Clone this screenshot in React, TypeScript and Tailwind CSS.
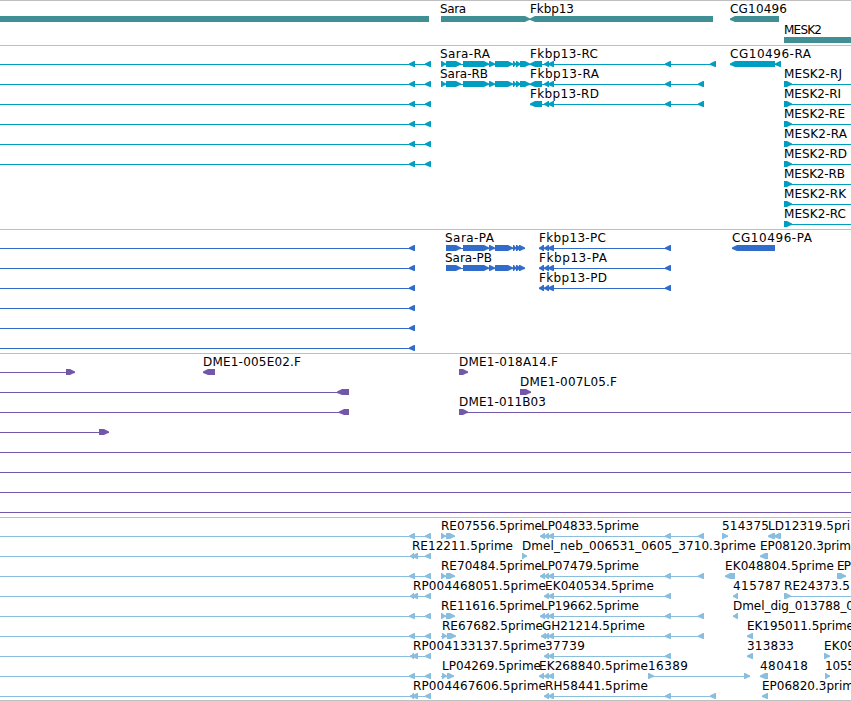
type Dir = 'l' | 'r';
type Exon = [start: number, end: number, dir: Dir];
type Label = [text: string, x: number, width: number];
type Row = { lines?: [number, number][]; exons?: Exon[]; labels?: Label[] };
type TrackData = { id: string; height: string; pitch: number; fill: string; rows: Row[] };

// left hand gene, shared by most of the rows
const TAIL: Exon[] = [[409, 415, 'l'], [425, 431, 'l']];
const TAIL_EST: Exon[] = [[410, 414, 'l'], [412, 418, 'l'], [425, 431, 'l']];

const SARA_CDS: Exon[] = [[446, 461, 'r'], [463, 489, 'r'], [489, 495, 'r'], [495, 513, 'r'], [513, 517, 'r'], [516, 521, 'r']];
const FKBP_CDS: Exon[] = [[544, 549, 'l'], [548, 554, 'l'], [665, 671, 'l']];

const saraR = (name: string): Row => ({
  lines: [[0, 431], [441, 530], [530, 704]],
  exons: [...TAIL, [441, 446, 'r'], ...SARA_CDS, [520, 530, 'r'], [530, 542, 'l'], ...FKBP_CDS],
  labels: [[name, 440, name === 'Sara-RA' ? 50 : 48]],
});

const mesk = (name: string, width: number): Row => ({
  lines: [[784, 851]],
  exons: [[784, 792, 'r']],
  labels: [[name, 784, width]],
});

const merge = (...rows: Row[]): Row => ({
  lines: rows.flatMap((r) => r.lines ?? []),
  exons: rows.flatMap((r) => r.exons ?? []),
  labels: rows.flatMap((r) => r.labels ?? []),
});

const tail: Row = { lines: [[0, 431]], exons: TAIL };
const tailEst: Row = { lines: [[0, 431]], exons: TAIL_EST };
const tailCds: Row = { lines: [[0, 415]], exons: [[409, 415, 'l']] };

const protein = (sara: Label | null, fkbp: Label): Row => merge(
  tailCds,
  sara ? { lines: [[446, 525]], exons: [...SARA_CDS, [519, 525, 'r']], labels: [sara] } : {},
  { lines: [[539, 671]], exons: [[539, 544, 'l'], ...FKBP_CDS], labels: [fkbp] },
);

const saraEst = (name: string, x: number, width: number, end: number): Row => ({
  lines: [[441, end]],
  exons: [[x, x + 5, 'r'], [x + 5, end, 'r']],
  labels: [[name, x, width]],
});

const fkbpEst = (name: string, x: number, width: number, start: number, end: number): Row => ({
  lines: [[start, end]],
  exons: [
    ...(start < 545 ? [[start, start + 5, 'l'] as Exon] : []),
    ...FKBP_CDS.filter((e) => e[1] <= end),
    ...(end > 671 ? [[end - 6, end, 'l'] as Exon] : []),
  ],
  labels: [[name, x, width]],
});

const hit = (name: string, x: number, width: number, end: number, dir: Dir): Row => ({
  exons: [[x, end, dir]],
  labels: [[name, x, width]],
});

const tracks: TrackData[] = [
  {
    id: 'genes', height: 'h-[45px]', pitch: 21, fill: '#3f8f94',
    rows: [
      {
        exons: [[441, 530, 'r'], [530, 713, 'l'], [730, 779, 'l']],
        labels: [['Sara', 440, 26], ['Fkbp13', 530, 44], ['CG10496', 730, 57]],
      },
      { labels: [['MESK2', 784, 38]] },
    ],
  },
  {
    id: 'transcripts', height: 'h-[184px]', pitch: 20, fill: '#009fc1',
    rows: [
      merge(saraR('Sara-RA'), {
        lines: [[704, 716], [730, 781]],
        exons: [[710, 716, 'l'], [730, 775, 'l'], [775, 781, 'l']],
        labels: [['Fkbp13-RC', 530, 68], ['CG10496-RA', 730, 81]],
      }),
      merge(saraR('Sara-RB'), { exons: [[698, 704, 'l']], labels: [['Fkbp13-RA', 530, 69]] }, mesk('MESK2-RJ', 58)),
      merge(tail, {
        lines: [[530, 704]],
        exons: [[530, 542, 'l'], ...FKBP_CDS, [698, 704, 'l']],
        labels: [['Fkbp13-RD', 530, 69]],
      }, mesk('MESK2-RI', 57)),
      merge(tail, mesk('MESK2-RE', 61)),
      merge(tail, mesk('MESK2-RA', 63)),
      merge(tail, mesk('MESK2-RD', 63)),
      mesk('MESK2-RB', 61),
      mesk('MESK2-RK', 62),
      mesk('MESK2-RC', 62),
    ],
  },
  {
    id: 'proteins', height: 'h-[124px]', pitch: 20, fill: '#316ccb',
    rows: [
      merge(protein(['Sara-PA', 445, 49], ['Fkbp13-PC', 539, 67]), hit('CG10496-PA', 732, 80, 775, 'l')),
      protein(['Sara-PB', 445, 47], ['Fkbp13-PA', 539, 68]),
      protein(null, ['Fkbp13-PD', 539, 68]),
      tailCds, tailCds, tailCds,
    ],
  },
  {
    id: 'clones', height: 'h-[164px]', pitch: 20, fill: '#7358aa',
    rows: [
      merge({ lines: [[0, 68]], exons: [[66, 75, 'r']] }, hit('DME1-005E02.F', 203, 98, 215, 'l'), hit('DME1-018A14.F', 459, 99, 468, 'r')),
      merge({ lines: [[0, 340]], exons: [[337, 349, 'l']] }, hit('DME1-007L05.F', 520, 97, 531, 'r')),
      merge({ lines: [[0, 340], [460, 851]], exons: [[339, 349, 'l']] }, hit('DME1-011B03', 459, 87, 468, 'r')),
      { lines: [[0, 100]], exons: [[99, 109, 'r']] },
      { lines: [[0, 851]] },
      { lines: [[0, 851]] },
      { lines: [[0, 851]] },
      { lines: [[0, 851]] },
    ],
  },
  {
    id: 'ests', height: 'h-[183px]', pitch: 20, fill: '#89bedf',
    rows: [
      merge(tail, saraEst('RE07556.5prime', 441, 101, 455), fkbpEst('LP04833.5prime', 541, 98, 540, 704),
        hit('514375', 722, 47, 728, 'r'),
        { exons: [[768, 775, 'l'], [774, 781, 'l']], labels: [['LD12319.5pri', 768, 82]] }),
      merge(tailEst, { exons: [[522, 527, 'r']], labels: [['RE12211.5prime', 412, 101], ['Dmel_neb_006531_0605_3710.3prime', 522, 234]] },
        hit('EP08120.3prim', 760, 91, 768, 'l')),
      merge(tail, saraEst('RE70484.5prime', 441, 101, 455), fkbpEst('LP07479.5prime', 541, 98, 540, 704),
        hit('EK048804.5prime', 725, 109, 735, 'l'), hit('EP', 837, 14, 846, 'r')),
      merge(tailEst, { labels: [['RP004468051.5prime', 413, 133]] }, fkbpEst('EK040534.5prime', 545, 109, 545, 671),
        hit('415787', 733, 48, 738, 'l'),
        { lines: [[784, 851]], exons: [[784, 791, 'r']], labels: [['RE24373.5', 784, 66]] }),
      merge(tail, saraEst('RE11616.5prime', 441, 101, 455), fkbpEst('LP19662.5prime', 541, 98, 540, 704),
        hit('Dmel_dig_013788_0', 733, 121, 738, 'l')),
      merge(tail, saraEst('RE67682.5prime', 442, 101, 456), fkbpEst('GH21214.5prime', 542, 103, 541, 704),
        hit('EK195011.5prime', 747, 107, 753, 'l')),
      merge(tailEst, { labels: [['RP004133137.5prime', 413, 133]] }, fkbpEst('37739', 545, 40, 545, 671),
        hit('313833', 747, 47, 753, 'l'), hit('EK09', 824, 31, 830, 'r')),
      merge(tail, saraEst('LP04269.5prime', 442, 99, 454), fkbpEst('EK268840.5prime', 539, 109, 539, 554),
        { lines: [[648, 749]], exons: [[648, 654, 'r'], [744, 750, 'r']], labels: [['16389', 648, 40]] },
        hit('480418', 760, 48, 768, 'l'), hit('1055', 825, 30, 830, 'r')),
      merge(tailEst, { labels: [['RP004467606.5prime', 413, 133]] }, fkbpEst('RH58441.5prime', 545, 103, 545, 716),
        hit('EP06820.3prim', 762, 92, 768, 'l')),
    ],
  },
];

function ExonShape({ exon, y }: { exon: Exon; y: number }) {
  const [a, b, dir] = exon;
  const tip = Math.min(6, b - a);
  // the head bulges a little towards its point
  const points = dir === 'r'
    ? `${a},${y} ${b - tip + 1},${y} ${b - 2},${y + 1.5} ${b},${y + 2.5} ${b},${y + 4} ${b - 2},${y + 4.5} ${b - tip + 1},${y + 6} ${a},${y + 6}`
    : `${b},${y} ${a + tip - 1},${y} ${a + 2},${y + 1.5} ${a},${y + 2.5} ${a},${y + 4} ${a + 2},${y + 4.7} ${a + tip - 1},${y + 6} ${b},${y + 6}`;
  return <polygon points={points} />;
}

function Track({ track }: { track: TrackData }) {
  return (
    <section className={`w-full shrink-0 overflow-hidden border-t border-[#bfbfbf] ${track.height}`}>
      <svg width="851" height="183" className="block" fill={track.fill}>
        {track.id === 'genes' && (
          <>
            <rect x="0" y="15" width="429" height="6" />
            <rect x="784" y="36" width="67" height="6" />
          </>
        )}
        {track.rows.map((row, i) => {
          const y = i * track.pitch;
          return (
            <g key={i}>
              {row.lines?.map(([a, b], k) => <rect key={k} x={a} y={y + 18} width={b - a} height="1" />)}
              {row.exons?.map((exon, k) => <ExonShape key={k} exon={exon} y={y + 15} />)}
              {row.labels?.map(([text, x, width]) => (
                <text key={text} x={x} y={y + 12} textLength={width} fill="#000" className="font-['DejaVu_Sans',sans-serif] text-[12px]">
                  {text}
                </text>
              ))}
            </g>
          );
        })}
      </svg>
    </section>
  );
}

export default function App() {
  return (
    <main className="flex h-[701px] w-[851px] flex-col overflow-hidden border-b border-[#bfbfbf] bg-white">
      {tracks.map((track) => <Track key={track.id} track={track} />)}
    </main>
  );
}
